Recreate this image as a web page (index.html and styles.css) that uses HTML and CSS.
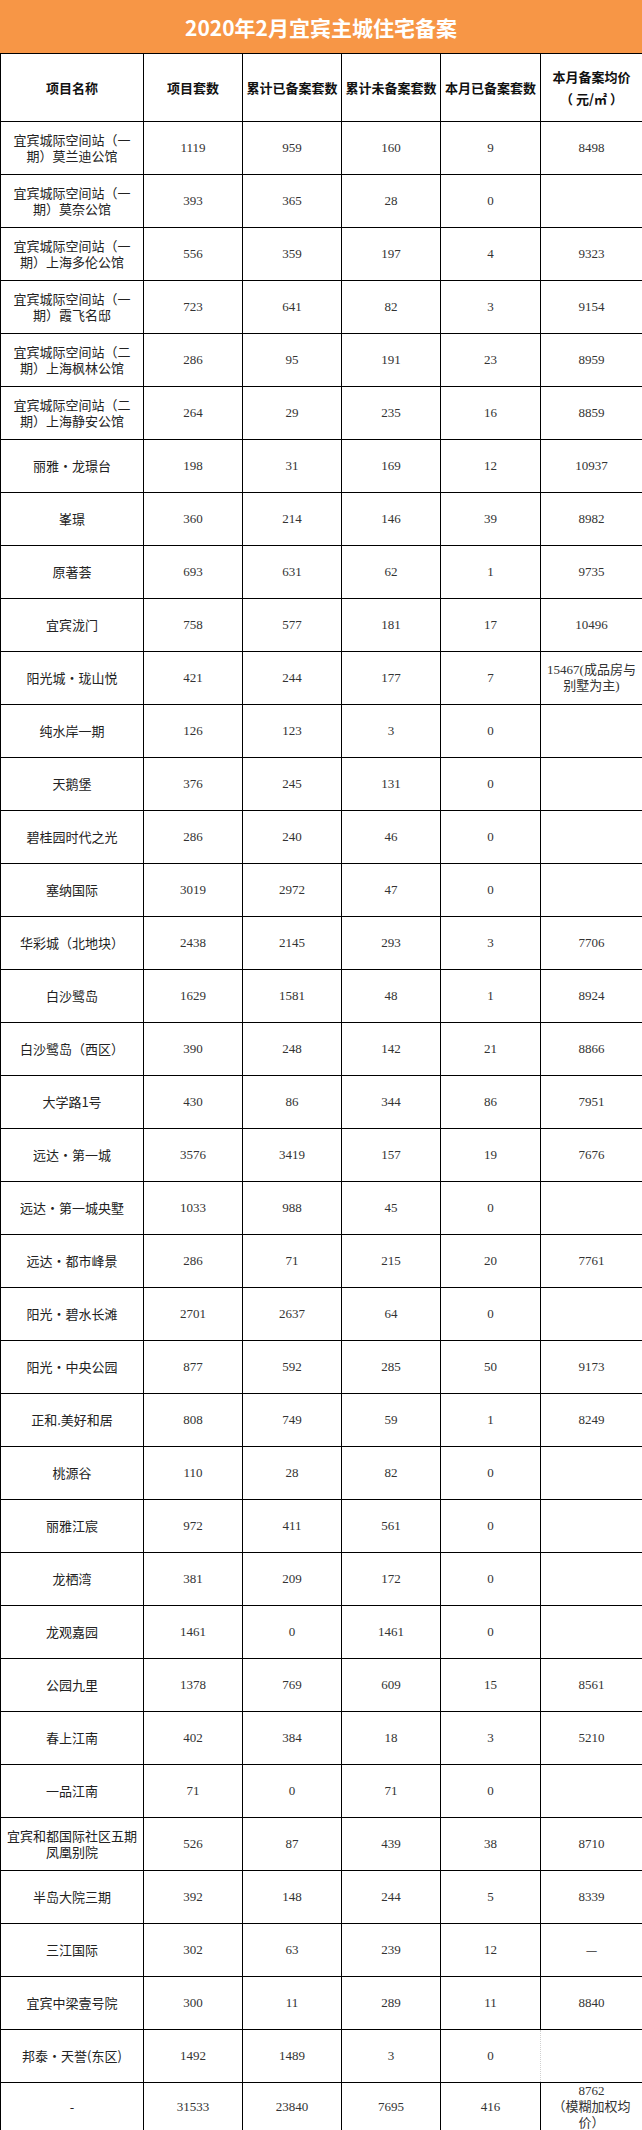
FILE: index.html
```html
<!DOCTYPE html>
<html lang="zh-CN">
<head>
<meta charset="utf-8">
<title>2020年2月宜宾主城住宅备案</title>
<link rel="stylesheet" href="styles.css">
</head>
<body>
<div class="title">2020年2月宜宾主城住宅备案</div>
<table class="sheet">
<colgroup>
<col class="c-name"><col class="c-n"><col class="c-n"><col class="c-n"><col class="c-n5"><col class="c-price">
</colgroup>
<thead>
<tr class="head-row"><th>项目名称</th><th>项目套数</th><th>累计已备案套数</th><th>累计未备案套数</th><th>本月已备案套数</th><th>本月备案均价<br>（ 元/㎡ ）</th></tr>
</thead>
<tbody>
<tr class="row"><td class="name">宜宾城际空间站（一期）莫兰迪公馆</td><td class="num">1119</td><td class="num">959</td><td class="num">160</td><td class="num">9</td><td class="num">8498</td></tr>
<tr class="row"><td class="name">宜宾城际空间站（一期）莫奈公馆</td><td class="num">393</td><td class="num">365</td><td class="num">28</td><td class="num">0</td><td class="num"></td></tr>
<tr class="row"><td class="name">宜宾城际空间站（一期）上海多伦公馆</td><td class="num">556</td><td class="num">359</td><td class="num">197</td><td class="num">4</td><td class="num">9323</td></tr>
<tr class="row"><td class="name">宜宾城际空间站（一期）霞飞名邸</td><td class="num">723</td><td class="num">641</td><td class="num">82</td><td class="num">3</td><td class="num">9154</td></tr>
<tr class="row"><td class="name">宜宾城际空间站（二期）上海枫林公馆</td><td class="num">286</td><td class="num">95</td><td class="num">191</td><td class="num">23</td><td class="num">8959</td></tr>
<tr class="row"><td class="name">宜宾城际空间站（二期）上海静安公馆</td><td class="num">264</td><td class="num">29</td><td class="num">235</td><td class="num">16</td><td class="num">8859</td></tr>
<tr class="row"><td class="name">丽雅·龙璟台</td><td class="num">198</td><td class="num">31</td><td class="num">169</td><td class="num">12</td><td class="num">10937</td></tr>
<tr class="row"><td class="name">峯璟</td><td class="num">360</td><td class="num">214</td><td class="num">146</td><td class="num">39</td><td class="num">8982</td></tr>
<tr class="row"><td class="name">原著荟</td><td class="num">693</td><td class="num">631</td><td class="num">62</td><td class="num">1</td><td class="num">9735</td></tr>
<tr class="row"><td class="name">宜宾泷门</td><td class="num">758</td><td class="num">577</td><td class="num">181</td><td class="num">17</td><td class="num">10496</td></tr>
<tr class="row"><td class="name">阳光城·珑山悦</td><td class="num">421</td><td class="num">244</td><td class="num">177</td><td class="num">7</td><td class="num">15467(成品房与别墅为主)</td></tr>
<tr class="row"><td class="name">纯水岸一期</td><td class="num">126</td><td class="num">123</td><td class="num">3</td><td class="num">0</td><td class="num"></td></tr>
<tr class="row"><td class="name">天鹅堡</td><td class="num">376</td><td class="num">245</td><td class="num">131</td><td class="num">0</td><td class="num"></td></tr>
<tr class="row"><td class="name">碧桂园时代之光</td><td class="num">286</td><td class="num">240</td><td class="num">46</td><td class="num">0</td><td class="num"></td></tr>
<tr class="row"><td class="name">塞纳国际</td><td class="num">3019</td><td class="num">2972</td><td class="num">47</td><td class="num">0</td><td class="num"></td></tr>
<tr class="row"><td class="name">华彩城（北地块）</td><td class="num">2438</td><td class="num">2145</td><td class="num">293</td><td class="num">3</td><td class="num">7706</td></tr>
<tr class="row"><td class="name">白沙鹭岛</td><td class="num">1629</td><td class="num">1581</td><td class="num">48</td><td class="num">1</td><td class="num">8924</td></tr>
<tr class="row"><td class="name">白沙鹭岛（西区）</td><td class="num">390</td><td class="num">248</td><td class="num">142</td><td class="num">21</td><td class="num">8866</td></tr>
<tr class="row"><td class="name">大学路1号</td><td class="num">430</td><td class="num">86</td><td class="num">344</td><td class="num">86</td><td class="num">7951</td></tr>
<tr class="row"><td class="name">远达·第一城</td><td class="num">3576</td><td class="num">3419</td><td class="num">157</td><td class="num">19</td><td class="num">7676</td></tr>
<tr class="row"><td class="name">远达·第一城央墅</td><td class="num">1033</td><td class="num">988</td><td class="num">45</td><td class="num">0</td><td class="num"></td></tr>
<tr class="row"><td class="name">远达·都市峰景</td><td class="num">286</td><td class="num">71</td><td class="num">215</td><td class="num">20</td><td class="num">7761</td></tr>
<tr class="row"><td class="name">阳光·碧水长滩</td><td class="num">2701</td><td class="num">2637</td><td class="num">64</td><td class="num">0</td><td class="num"></td></tr>
<tr class="row"><td class="name">阳光·中央公园</td><td class="num">877</td><td class="num">592</td><td class="num">285</td><td class="num">50</td><td class="num">9173</td></tr>
<tr class="row"><td class="name">正和.美好和居</td><td class="num">808</td><td class="num">749</td><td class="num">59</td><td class="num">1</td><td class="num">8249</td></tr>
<tr class="row"><td class="name">桃源谷</td><td class="num">110</td><td class="num">28</td><td class="num">82</td><td class="num">0</td><td class="num"></td></tr>
<tr class="row"><td class="name">丽雅江宸</td><td class="num">972</td><td class="num">411</td><td class="num">561</td><td class="num">0</td><td class="num"></td></tr>
<tr class="row"><td class="name">龙栖湾</td><td class="num">381</td><td class="num">209</td><td class="num">172</td><td class="num">0</td><td class="num"></td></tr>
<tr class="row"><td class="name">龙观嘉园</td><td class="num">1461</td><td class="num">0</td><td class="num">1461</td><td class="num">0</td><td class="num"></td></tr>
<tr class="row"><td class="name">公园九里</td><td class="num">1378</td><td class="num">769</td><td class="num">609</td><td class="num">15</td><td class="num">8561</td></tr>
<tr class="row"><td class="name">春上江南</td><td class="num">402</td><td class="num">384</td><td class="num">18</td><td class="num">3</td><td class="num">5210</td></tr>
<tr class="row"><td class="name">一品江南</td><td class="num">71</td><td class="num">0</td><td class="num">71</td><td class="num">0</td><td class="num"></td></tr>
<tr class="row"><td class="name">宜宾和都国际社区五期凤凰别院</td><td class="num">526</td><td class="num">87</td><td class="num">439</td><td class="num">38</td><td class="num">8710</td></tr>
<tr class="row"><td class="name">半岛大院三期</td><td class="num">392</td><td class="num">148</td><td class="num">244</td><td class="num">5</td><td class="num">8339</td></tr>
<tr class="row"><td class="name">三江国际</td><td class="num">302</td><td class="num">63</td><td class="num">239</td><td class="num">12</td><td class="num dash">—</td></tr>
<tr class="row"><td class="name">宜宾中梁壹号院</td><td class="num">300</td><td class="num">11</td><td class="num">289</td><td class="num">11</td><td class="num">8840</td></tr>
<tr class="row"><td class="name">邦泰·天誉(东区)</td><td class="num">1492</td><td class="num">1489</td><td class="num">3</td><td class="num faint-right">0</td><td class="num faint-left"></td></tr>
<tr class="row last"><td class="name">-</td><td class="num">31533</td><td class="num">23840</td><td class="num">7695</td><td class="num">416</td><td class="num">8762<br>（模糊加权均价）</td></tr>
</tbody>
</table>
</body>
</html>
```

FILE: styles.css
```css
* {
  box-sizing: border-box;
}

html,
body {
  margin: 0;
  padding: 0;
  background: #ffffff;
}

body {
  width: 642px;
  height: 2130px;
  overflow: hidden;
  font-family: "Noto Sans CJK SC", sans-serif;
  text-spacing-trim: space-all;
}

.title {
  height: 53px;
  background: #f79646;
  color: #ffffff;
  font-weight: 700;
  font-size: 21px;
  display: flex;
  align-items: center;
  justify-content: center;
}

.sheet {
  width: 642px;
  border-collapse: collapse;
  table-layout: fixed;
}

.c-name { width: 143px; }
.c-n { width: 99px; }
.c-n5 { width: 100px; }
.c-price { width: 102px; }

.sheet th,
.sheet td {
  border: 1px solid #000000;
  text-align: center;
  vertical-align: middle;
  padding: 0 3px;
}

.sheet th {
  font-family: "Noto Sans CJK SC", sans-serif;
  font-weight: 700;
  font-size: 13px;
  line-height: 22px;
  color: #111111;
  padding: 0 1px;
}

.head-row {
  height: 68px;
}

.row {
  height: 53px;
}

.row.last {
  height: 48px;
}

.name {
  font-family: "Noto Sans CJK SC", sans-serif;
  font-size: 13px;
  line-height: 16px;
  color: #222222;
  padding: 0 5px;
}

.num {
  font-family: "Liberation Serif", "Noto Sans CJK SC", serif;
  font-size: 13px;
  line-height: 16px;
  color: #333333;
}

.dash {
  font-family: "Noto Sans CJK SC", sans-serif;
}

.sheet td.faint-right {
  border-right: 1px dotted #d0d0d0;
}

.sheet td.faint-left {
  border-left: 1px dotted #d0d0d0;
}
```
